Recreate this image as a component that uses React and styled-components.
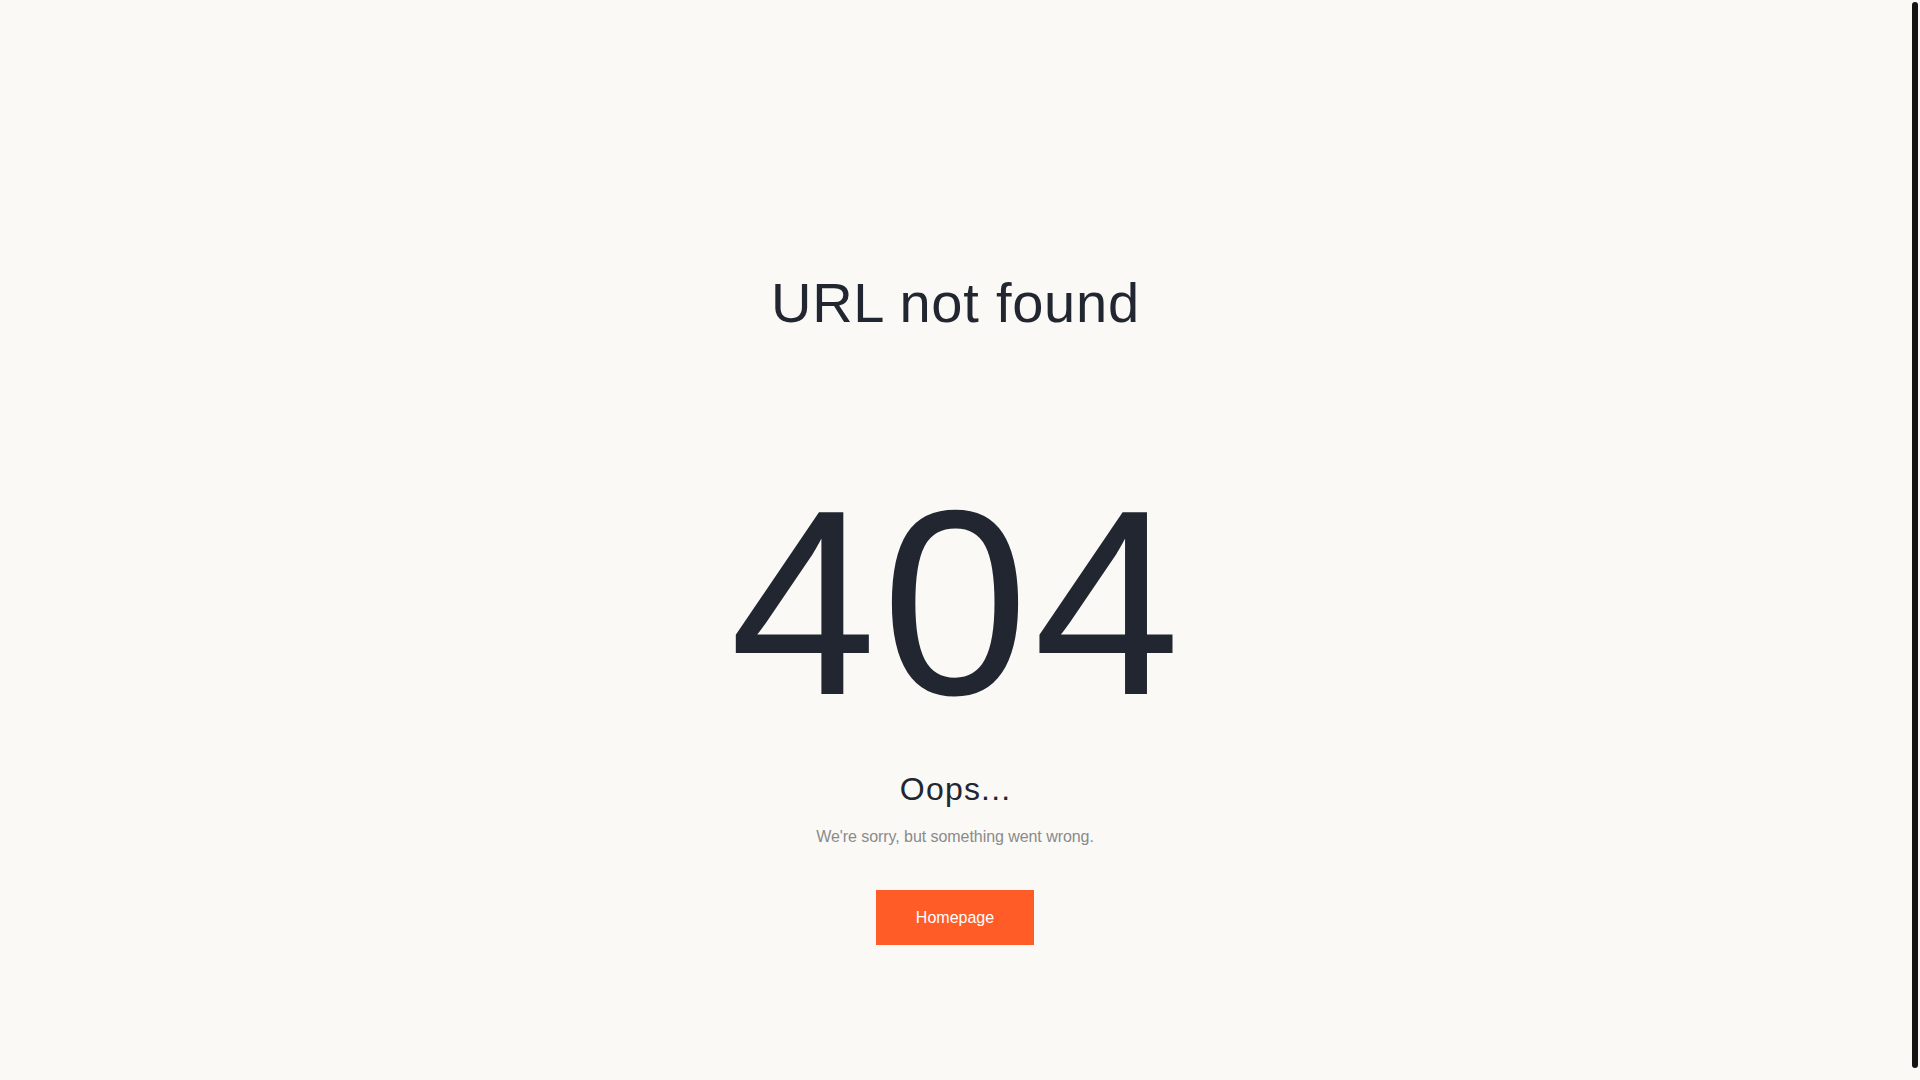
import styled, { createGlobalStyle } from 'styled-components';

const GlobalStyle = createGlobalStyle`
  html, body {
    margin: 0;
    padding: 0;
    background-color: #faf9f6;
    font-family: "Liberation Sans", Arial, sans-serif;
  }
`;

const App = () => {
  return (
    <>
      <GlobalStyle />
      <StFrame>
        <StPage>
          <StTitle>URL not found</StTitle>
          <StCode>404</StCode>
          <StOops>Oops...</StOops>
          <StMessage>We're sorry, but something went wrong.</StMessage>
          <StButton href="#">Homepage</StButton>
        </StPage>
        {/* the page's scrollbar, as it shows in the screenshot */}
        <StScrollRail>
          <StScrollThumb />
        </StScrollRail>
      </StFrame>
    </>
  );
};

export default App;

const StFrame = styled.div`
  display: flex;
  height: 100vh;
  overflow: hidden;
`;

const StPage = styled.main`
  flex: 1;
  display: flex;
  flex-direction: column;
  align-items: center;

  padding-top: 275px;

  color: #222630;
  text-align: center;
`;

const StTitle = styled.h1`
  margin: 0;
  padding-left: 0.75px;
  font-size: 56px;
  font-weight: 400;
  line-height: 1;
  letter-spacing: 0.75px;
`;

const StCode = styled.div`
  margin-top: 140px;
  padding-left: 5px;
  font-size: 264px;
  line-height: 1;
  letter-spacing: 5px;
`;

const StOops = styled.h2`
  margin: 38px 0 0;
  padding-left: 1.2px;
  font-size: 32px;
  font-weight: 400;
  line-height: 1;
  letter-spacing: 1.2px;
`;

const StMessage = styled.p`
  margin: 24px 0 0;
  font-size: 16px;
  line-height: 1;
  letter-spacing: -0.06px;
  color: #8a8a8a;
`;

const StButton = styled.a`
  display: inline-block;
  margin-top: 45px;
  padding: 18px 40px;

  background-color: #ff5c28;
  color: #ffffff;
  font-size: 16px;
  line-height: 19px;
  text-decoration: none;
`;

const StScrollRail = styled.div`
  box-sizing: border-box;
  width: 10px;
  padding: 2px 2px 12px;
`;

const StScrollThumb = styled.div`
  height: 100%;
  border-radius: 3px;
  background-color: #141414;
`;
